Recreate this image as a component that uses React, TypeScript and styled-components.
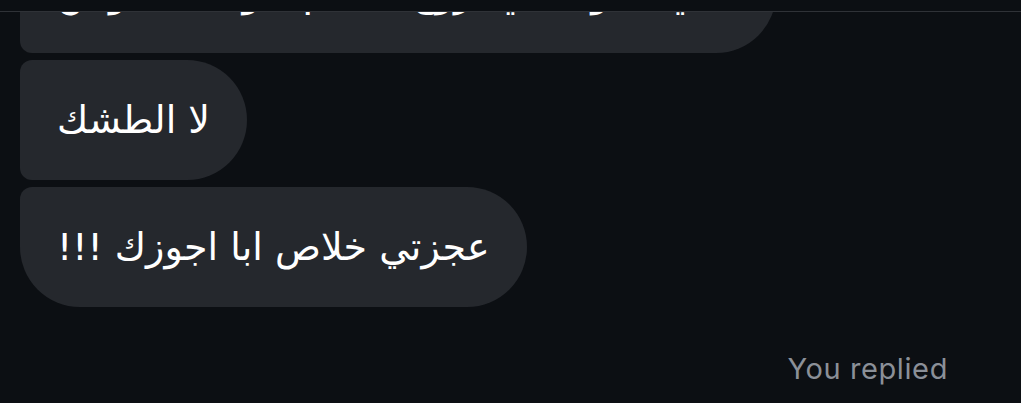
import * as React from "react";
import styled, { createGlobalStyle } from "styled-components";

type Place = "first" | "middle" | "last";

interface Message {
  id: number;
  text: string;
  place: Place;
}

const messages: Message[] = [
  { id: 1, text: "يعني شلون تبي تروح معاهم بدون ما تقولين", place: "first" },
  { id: 2, text: "لا الطشك", place: "middle" },
  { id: 3, text: "عجزتي خلاص ابا اجوزك !!!", place: "last" },
];

export default function App() {
  return (
    <>
      <GlobalStyle />
      <Screen>
        <Header />
        <Thread>
          <MessageList>
            {messages.map((m) => (
              <Row key={m.id}>
                <Bubble place={m.place} dir="rtl">
                  {m.text}
                </Bubble>
              </Row>
            ))}
          </MessageList>
          <Status>You replied</Status>
        </Thread>
      </Screen>
    </>
  );
}

const GlobalStyle = createGlobalStyle`
  html, body {
    margin: 0;
    padding: 0;
    background: #0c0f13;
  }
`;

const Screen = styled.div`
  width: 1021px;
  height: 403px;
  display: flex;
  flex-direction: column;
  background: #0c0f13;
  overflow: hidden;
`;

const Header = styled.div`
  flex: 0 0 11px;
  border-bottom: 1px solid #2f3237;
  position: relative;
  z-index: 1;
  background: #0c0f13;
`;

const Thread = styled.div`
  flex: 1;
  display: flex;
  flex-direction: column;
  overflow: hidden;
`;

// scrolled: first bubble sits partly under the header
const MessageList = styled.div`
  display: flex;
  flex-direction: column;
  gap: 7px;
  padding-left: 20px;
  margin-top: -79px;
`;

const Row = styled.div`
  display: flex;
  justify-content: flex-start;
`;

const radii: Record<Place, string> = {
  first: "60px 60px 60px 12px",
  middle: "12px 60px 60px 12px",
  last: "12px 60px 60px 60px",
};

const Bubble = styled.div<{ place: Place }>`
  background: #25282d;
  color: #ffffff;
  font-family: "DejaVu Sans", sans-serif;
  font-size: 38px;
  line-height: 46px;
  padding: 37px 37px 37px 37px;
  border-radius: ${(p) => radii[p.place]};
  white-space: nowrap;
`;

const Status = styled.div`
  align-self: flex-end;
  margin: 44px 73px 0 0;
  font-family: Inter, "Liberation Sans", sans-serif;
  font-size: 29px;
  color: #8b9098;
  letter-spacing: 0.6px;
`;
